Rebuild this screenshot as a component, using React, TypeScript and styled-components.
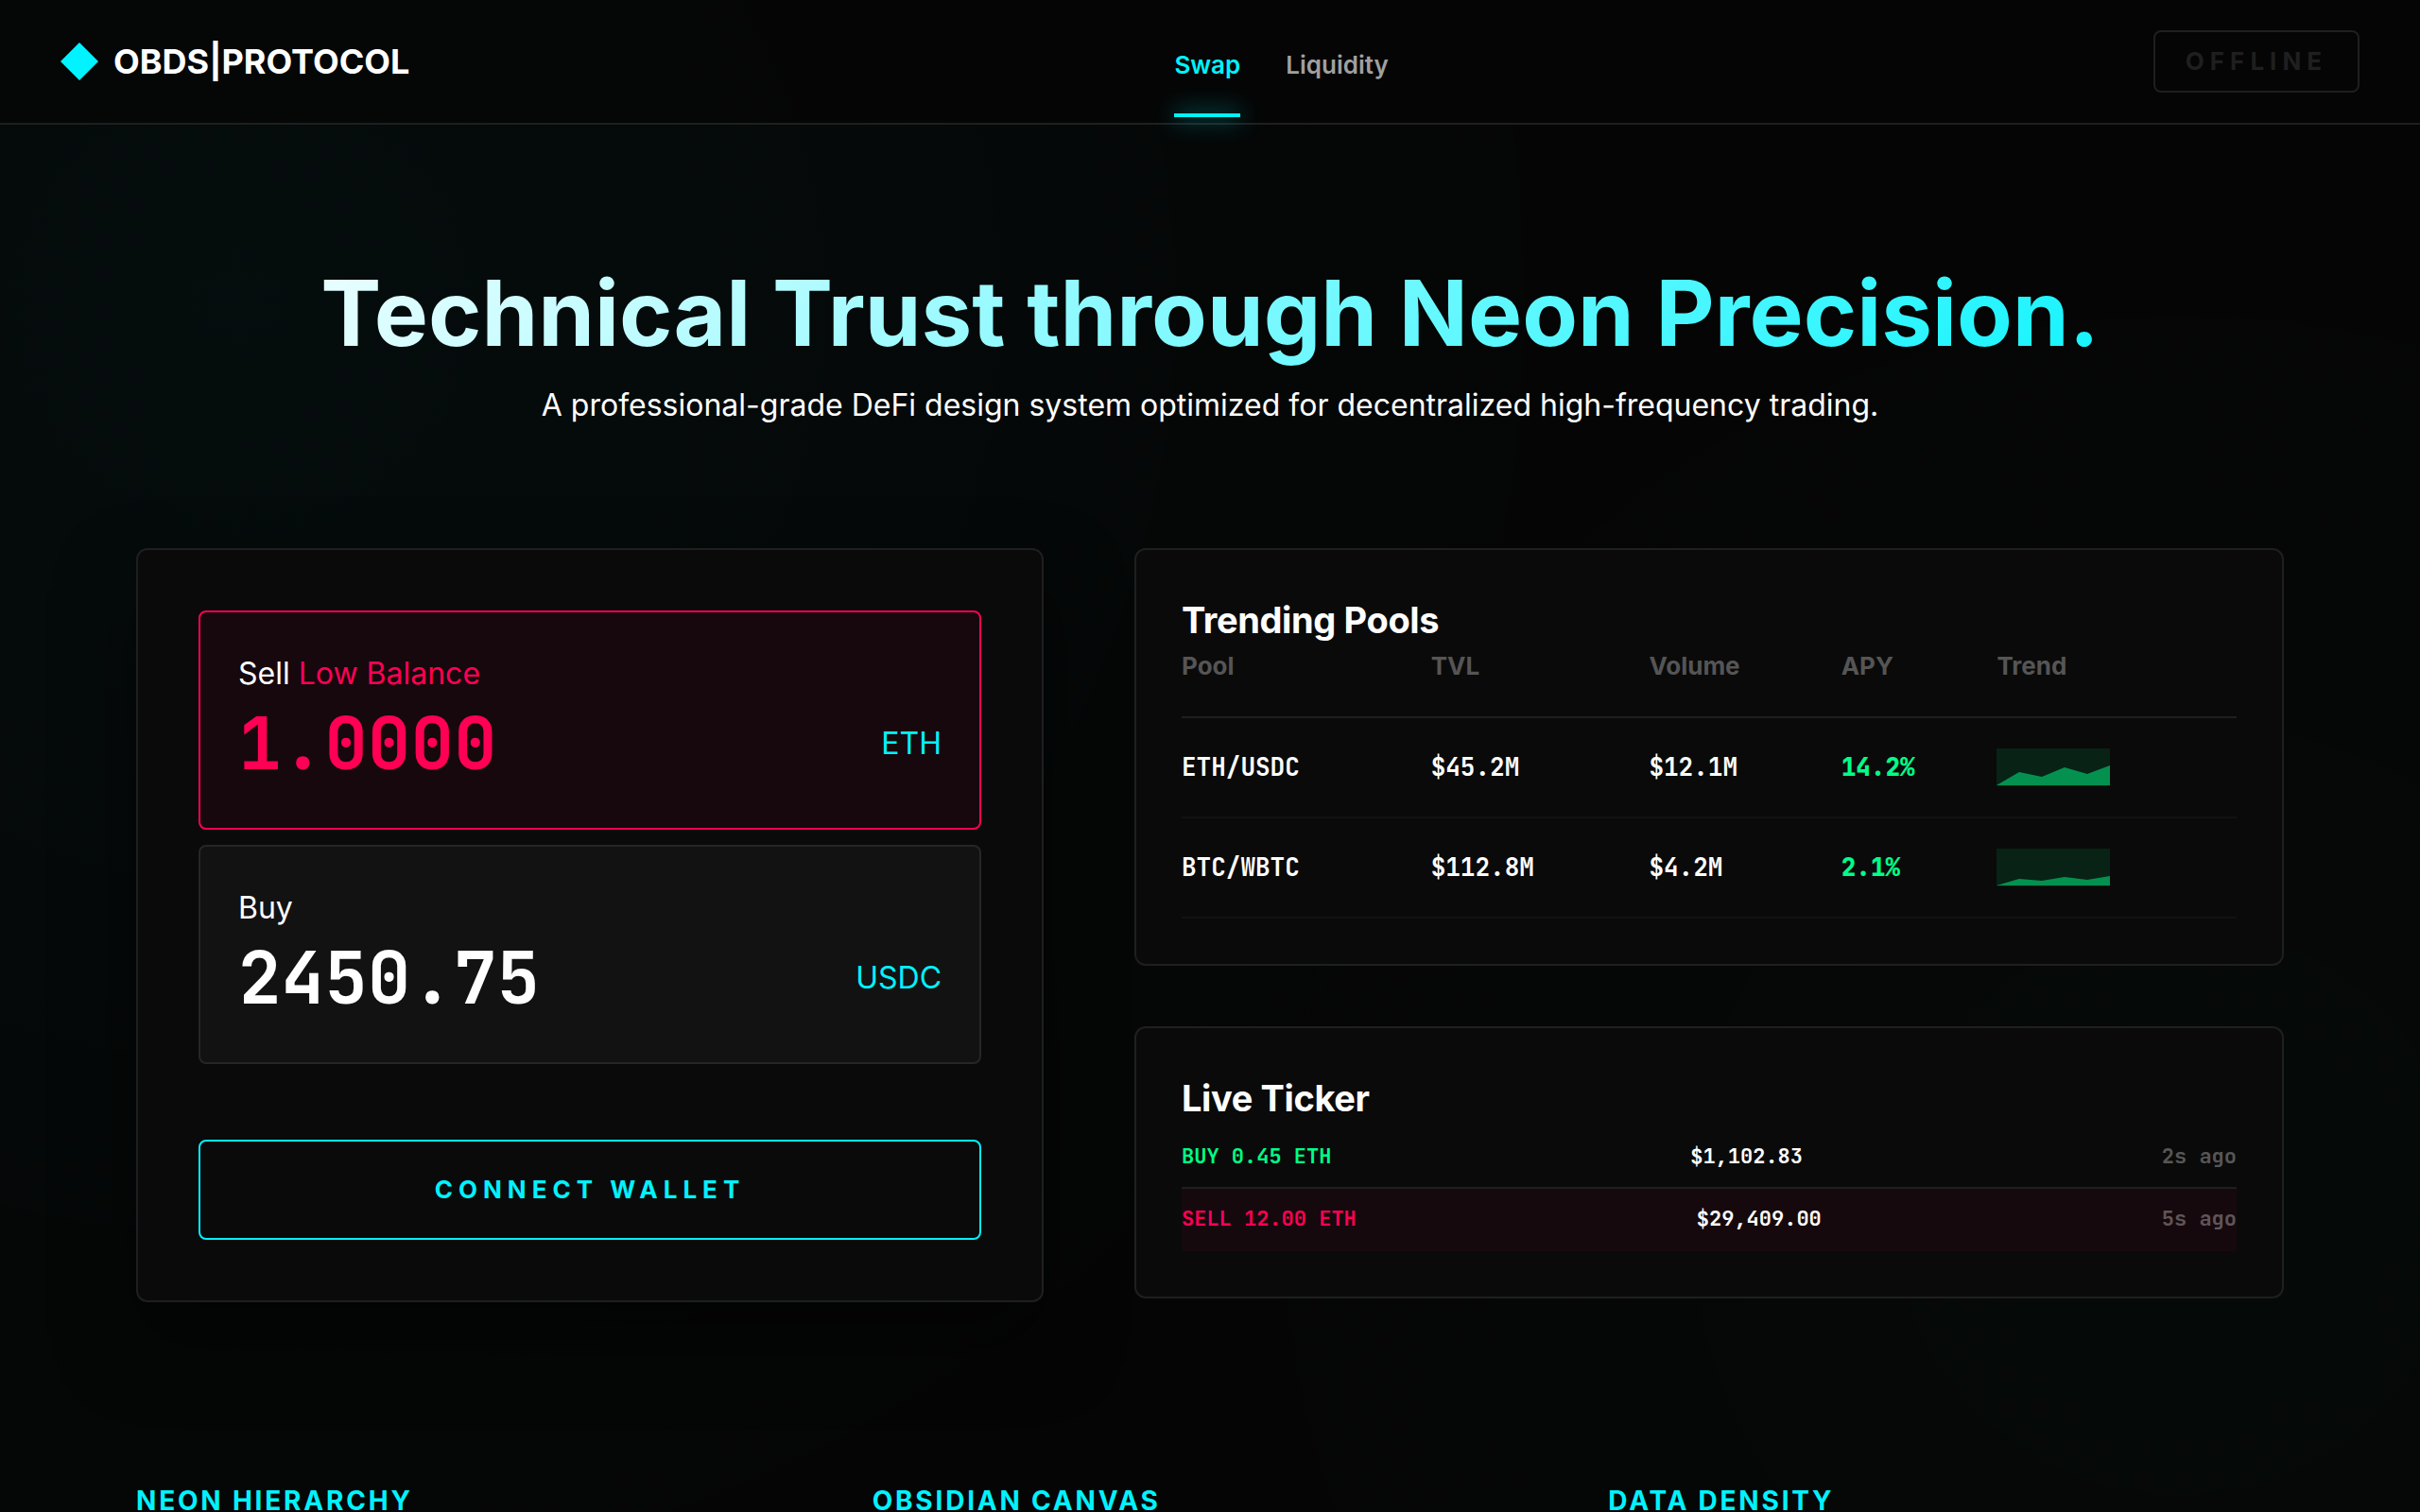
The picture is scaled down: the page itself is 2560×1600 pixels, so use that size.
import React from 'react';
import styled, { createGlobalStyle } from 'styled-components';

const sans = `Inter, "Liberation Sans", sans-serif`;
const mono = `"JetBrains Mono", "DejaVu Sans Mono", monospace`;

const color = {
  cyan: '#00f3ff',
  red: '#ff0055',
  green: '#00ff88',
  line: '#1f1f1f',
  muted: '#555555',
};

const GlobalStyle = createGlobalStyle`
  *, *::before, *::after { box-sizing: border-box; }
  body {
    margin: 0;
    background: #050505;
    color: #ffffff;
    font-family: ${sans};
    font-size: 32px;
    line-height: 50px;
  }
  h1, h2, h3, p { margin: 0; }
`;

const Page = styled.div`
  display: flex;
  flex-direction: column;
  height: 100vh;
  overflow: hidden;
  background:
    radial-gradient(circle at 10% 20%, rgba(0, 243, 255, 0.03) 0%, transparent 55%),
    radial-gradient(circle at 90% 80%, rgba(0, 255, 136, 0.02) 0%, transparent 40%),
    #050505;
`;

const Header = styled.header`
  display: flex;
  flex: none;
  align-items: center;
  justify-content: space-between;
  padding: 32px 64px;
  border-bottom: 2px solid ${color.line};
  background: rgba(5, 5, 5, 0.8);
`;

const Brand = styled.a`
  display: flex;
  align-items: center;
  gap: 16px;
  color: #ffffff;
  font-size: 36px;
  font-weight: 700;
  text-decoration: none;
`;

const Diamond = styled.span`
  width: 40px;
  height: 40px;
  background: ${color.cyan};
  clip-path: polygon(50% 0, 100% 50%, 50% 100%, 0 50%);
`;

const Nav = styled.nav`
  display: flex;
  gap: 48px;
  padding-top: 8px;
`;

const NavLink = styled.a<{ $active?: boolean }>`
  position: relative;
  color: ${(p) => (p.$active ? color.cyan : '#a0a0a0')};
  font-size: 26px;
  font-weight: 600;
  line-height: 42px;
  text-decoration: none;

  &::after {
    content: '';
    display: ${(p) => (p.$active ? 'block' : 'none')};
    position: absolute;
    left: 0;
    right: 0;
    bottom: -34px;
    height: 4px;
    background: ${color.cyan};
    box-shadow: 0 0 24px rgba(0, 243, 255, 0.9);
  }
`;

const Button = styled.button`
  padding: 10px 32px;
  border: 2px solid ${color.line};
  border-radius: 8px;
  background: transparent;
  color: ${color.line};
  font-family: ${sans};
  font-size: 26px;
  font-weight: 700;
  line-height: 42px;
  letter-spacing: 6px;
`;

const ConnectButton = styled(Button)`
  width: 100%;
  margin-top: 80px;
  padding: 30px 32px;
  border-color: ${color.cyan};
  color: ${color.cyan};
`;

const Main = styled.main`
  display: flex;
  flex-direction: column;
  padding: 142px 144px 0;
`;

const Hero = styled.section`
  text-align: center;
`;

const HeroTitle = styled.h1`
  background: linear-gradient(135deg, #ffffff 0%, ${color.cyan} 100%);
  background-clip: text;
  -webkit-background-clip: text;
  color: transparent;
  font-size: 96px;
  font-weight: 700;
  line-height: 114px;
`;

const HeroText = styled.p`
  && { margin-top: 16px; }
`;

const Workspace = styled.section`
  display: grid;
  grid-template-columns: 960px 1fr;
  align-items: start;
  gap: 96px;
  margin-top: 126px;
`;

const Card = styled.section`
  padding: 48px;
  border: 2px solid ${color.line};
  border-radius: 12px;
  background: #0a0a0a;
`;

const SwapCard = styled(Card).attrs({ as: 'form' })`
  display: flex;
  flex-direction: column;
  padding: 64px;
  box-shadow: 0 40px 80px rgba(0, 0, 0, 0.5);
`;

const Field = styled.div<{ $error?: boolean }>`
  padding: 40px;
  border: 2px solid ${(p) => (p.$error ? color.red : '#262626')};
  border-radius: 8px;
  background: ${(p) => (p.$error ? '#16080d' : '#121212')};

  & + & { margin-top: 16px; }
`;

const FieldLabel = styled.label`
  display: block;
`;

const Warning = styled.span`
  color: ${color.red};
`;

const FieldRow = styled.div`
  display: flex;
  align-items: center;
  gap: 32px;
`;

const Amount = styled.input<{ $error?: boolean }>`
  flex: 1;
  min-width: 0;
  height: 98px;
  padding: 0 0 2px;
  border: 0;
  outline: 0;
  background: transparent;
  color: ${(p) => (p.$error ? color.red : '#ffffff')};
  font-family: ${mono};
  font-size: 76px;
  font-weight: 700;
`;

const Token = styled.span`
  color: ${color.cyan};
`;

const Side = styled.div`
  display: flex;
  flex-direction: column;
  gap: 64px;
`;

const CardTitle = styled.h2`
  && { margin-bottom: 4px; }
  font-size: 38px;
  font-weight: 700;
  line-height: 52px;
  letter-spacing: -0.01em;
`;

const PoolTable = styled.table`
  width: 100%;
  border-collapse: separate;
  border-spacing: 0;
  text-align: left;
  font-size: 26px;
  line-height: 38px;
`;

const Th = styled.th`
  padding: 0 0 34px;
  border-bottom: 2px solid ${color.line};
  color: ${color.muted};
  font-weight: 700;
`;

const Td = styled.td<{ $gain?: boolean }>`
  padding: 32px 0;
  border-bottom: 2px solid #121212;
  color: ${(p) => (p.$gain ? color.green : '#ffffff')};
  font-family: ${mono};
  font-weight: ${(p) => (p.$gain ? 800 : 700)};
`;

const Spark = styled.svg`
  display: block;
  width: 120px;
  height: 40px;
  background: rgba(0, 255, 136, 0.1);
`;

const TickerList = styled.ul`
  margin: 0;
  padding: 0;
  list-style: none;
`;

const TickerRow = styled.li<{ $sell?: boolean }>`
  display: flex;
  justify-content: space-between;
  padding: 16px 0;
  border-bottom: 2px solid ${(p) => (p.$sell ? 'transparent' : color.line)};
  background: ${(p) => (p.$sell ? 'rgba(255, 0, 85, 0.05)' : 'transparent')};
  font-family: ${mono};
  font-size: 22px;
  font-weight: 600;
  line-height: 32px;
`;

const Trade = styled.span<{ $sell?: boolean }>`
  color: ${(p) => (p.$sell ? color.red : color.green)};
`;

const Age = styled.time`
  color: rgba(255, 255, 255, 0.33);
`;

const Features = styled.section`
  display: grid;
  grid-template-columns: repeat(3, 1fr);
  gap: 64px;
  margin-top: 188px;
`;

const FeatureTitle = styled.h3`
  color: ${color.cyan};
  font-size: 28px;
  font-weight: 700;
  line-height: 44px;
  letter-spacing: 0.1em;
  text-transform: uppercase;
`;

const pools = [
  { pool: 'ETH/USDC', tvl: '$45.2M', volume: '$12.1M', apy: '14.2%', trend: '0,39 24,25 48,30 72,20 96,27 120,18 120,39' },
  { pool: 'BTC/WBTC', tvl: '$112.8M', volume: '$4.2M', apy: '2.1%', trend: '0,39 24,32 48,34 72,30 96,33 120,29 120,39' },
];

const trades = [
  { label: 'BUY 0.45 ETH', price: '$1,102.83', age: '2s ago', sell: false },
  { label: 'SELL 12.00 ETH', price: '$29,409.00', age: '5s ago', sell: true },
];

const features = ['Neon Hierarchy', 'Obsidian Canvas', 'Data Density'];

export default function App() {
  return (
    <Page>
      <GlobalStyle />
      <Header>
        <Brand href="#">
          <Diamond />
          OBDS|PROTOCOL
        </Brand>
        <Nav>
          <NavLink href="#swap" $active>Swap</NavLink>
          <NavLink href="#liquidity">Liquidity</NavLink>
        </Nav>
        <Button type="button">OFFLINE</Button>
      </Header>
      <Main>
        <Hero>
          <HeroTitle>Technical Trust through Neon Precision.</HeroTitle>
          <HeroText>
            A professional-grade DeFi design system optimized for decentralized high-frequency trading.
          </HeroText>
        </Hero>
        <Workspace>
          <SwapCard>
            <Field $error>
              <FieldLabel htmlFor="sell">
                Sell <Warning>Low Balance</Warning>
              </FieldLabel>
              <FieldRow>
                <Amount id="sell" type="text" defaultValue="1.0000" $error />
                <Token>ETH</Token>
              </FieldRow>
            </Field>
            <Field>
              <FieldLabel htmlFor="buy">Buy</FieldLabel>
              <FieldRow>
                <Amount id="buy" type="text" defaultValue="2450.75" />
                <Token>USDC</Token>
              </FieldRow>
            </Field>
            <ConnectButton type="button">CONNECT WALLET</ConnectButton>
          </SwapCard>
          <Side>
            <Card>
              <CardTitle>Trending Pools</CardTitle>
              <PoolTable>
                <thead>
                  <tr>
                    <Th>Pool</Th>
                    <Th>TVL</Th>
                    <Th>Volume</Th>
                    <Th>APY</Th>
                    <Th>Trend</Th>
                  </tr>
                </thead>
                <tbody>
                  {pools.map((row) => (
                    <tr key={row.pool}>
                      <Td>{row.pool}</Td>
                      <Td>{row.tvl}</Td>
                      <Td>{row.volume}</Td>
                      <Td $gain>{row.apy}</Td>
                      <Td>
                        <Spark viewBox="0 0 120 40" aria-hidden="true">
                          <polygon points={row.trend} fill={color.green} fillOpacity="0.5" />
                        </Spark>
                      </Td>
                    </tr>
                  ))}
                </tbody>
              </PoolTable>
            </Card>
            <Card>
              <CardTitle>Live Ticker</CardTitle>
              <TickerList>
                {trades.map((trade) => (
                  <TickerRow key={trade.label} $sell={trade.sell}>
                    <Trade $sell={trade.sell}>{trade.label}</Trade>
                    <span>{trade.price}</span>
                    <Age>{trade.age}</Age>
                  </TickerRow>
                ))}
              </TickerList>
            </Card>
          </Side>
        </Workspace>
        <Features>
          {features.map((title) => (
            <FeatureTitle key={title}>{title}</FeatureTitle>
          ))}
        </Features>
      </Main>
    </Page>
  );
}
